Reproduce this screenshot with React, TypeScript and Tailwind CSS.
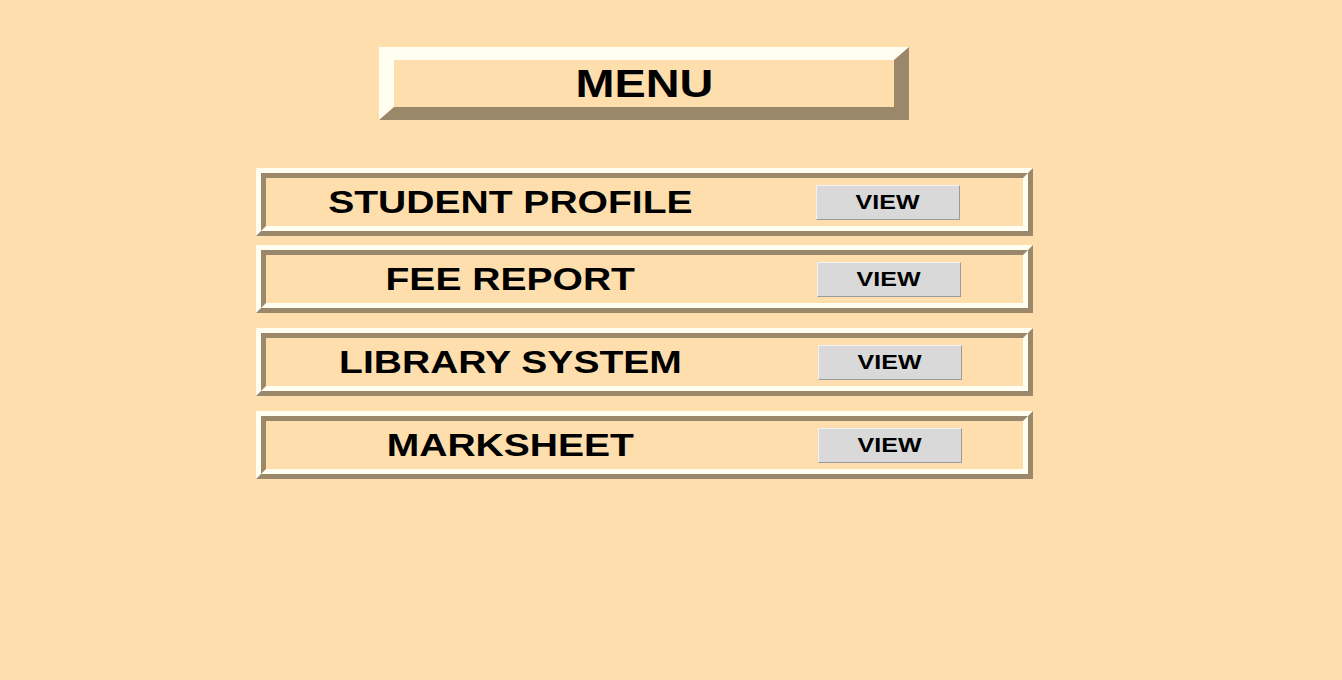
const rows = [
  { label: "STUDENT PROFILE", mt: "mt-[48px]", btn: "ml-[60px]" },
  { label: "FEE REPORT", mt: "mt-[9px]", btn: "ml-[61px]" },
  { label: "LIBRARY SYSTEM", mt: "mt-[15px]", btn: "ml-[62px]" },
  { label: "MARKSHEET", mt: "mt-[15px]", btn: "ml-[62px]" },
];

function MenuRow({ label, mt, btn }: { label: string; mt: string; btn: string }) {
  return (
    <div
      className={`${mt} w-[777px] h-[68px] border-[5px] border-t-[#fffef0] border-l-[#fffef0] border-b-[#9b876a] border-r-[#9b876a]`}
    >
      <div className="h-full border-[5px] border-t-[#9b876a] border-l-[#9b876a] border-b-[#fffef0] border-r-[#fffef0] flex items-center">
        <div className="w-[490px] flex justify-center">
          <span className="inline-block scale-x-[1.22] text-[32px] leading-none font-bold text-black">
            {label}
          </span>
        </div>
        <button
          className={`${btn} w-[144px] h-[35px] bg-[#d9d9d9] border border-t-[#f2f2f2] border-l-[#f2f2f2] border-b-[#9a9a9a] border-r-[#9a9a9a] flex items-center justify-center`}
        >
          <span className="inline-block scale-x-[1.25] text-[20px] leading-none font-bold text-black">
            VIEW
          </span>
        </button>
      </div>
    </div>
  );
}

export default function App() {
  return (
    <div
      className="min-h-[680px] w-full bg-[#fedead]"
      style={{ fontFamily: '"Liberation Sans", Arial, sans-serif' }}
    >
      <div className="w-[1288px] flex flex-col items-center pt-[47px]">
        <div className="w-[530px] h-[73px] border-x-[15px] border-y-[13px] border-t-[#fffef0] border-l-[#fffef0] border-b-[#9b876a] border-r-[#9b876a] flex items-center justify-center">
          <span className="inline-block scale-x-[1.2] text-[39px] leading-none font-bold text-black">
            MENU
          </span>
        </div>
        {rows.map((r) => (
          <MenuRow key={r.label} label={r.label} mt={r.mt} btn={r.btn} />
        ))}
      </div>
    </div>
  );
}
